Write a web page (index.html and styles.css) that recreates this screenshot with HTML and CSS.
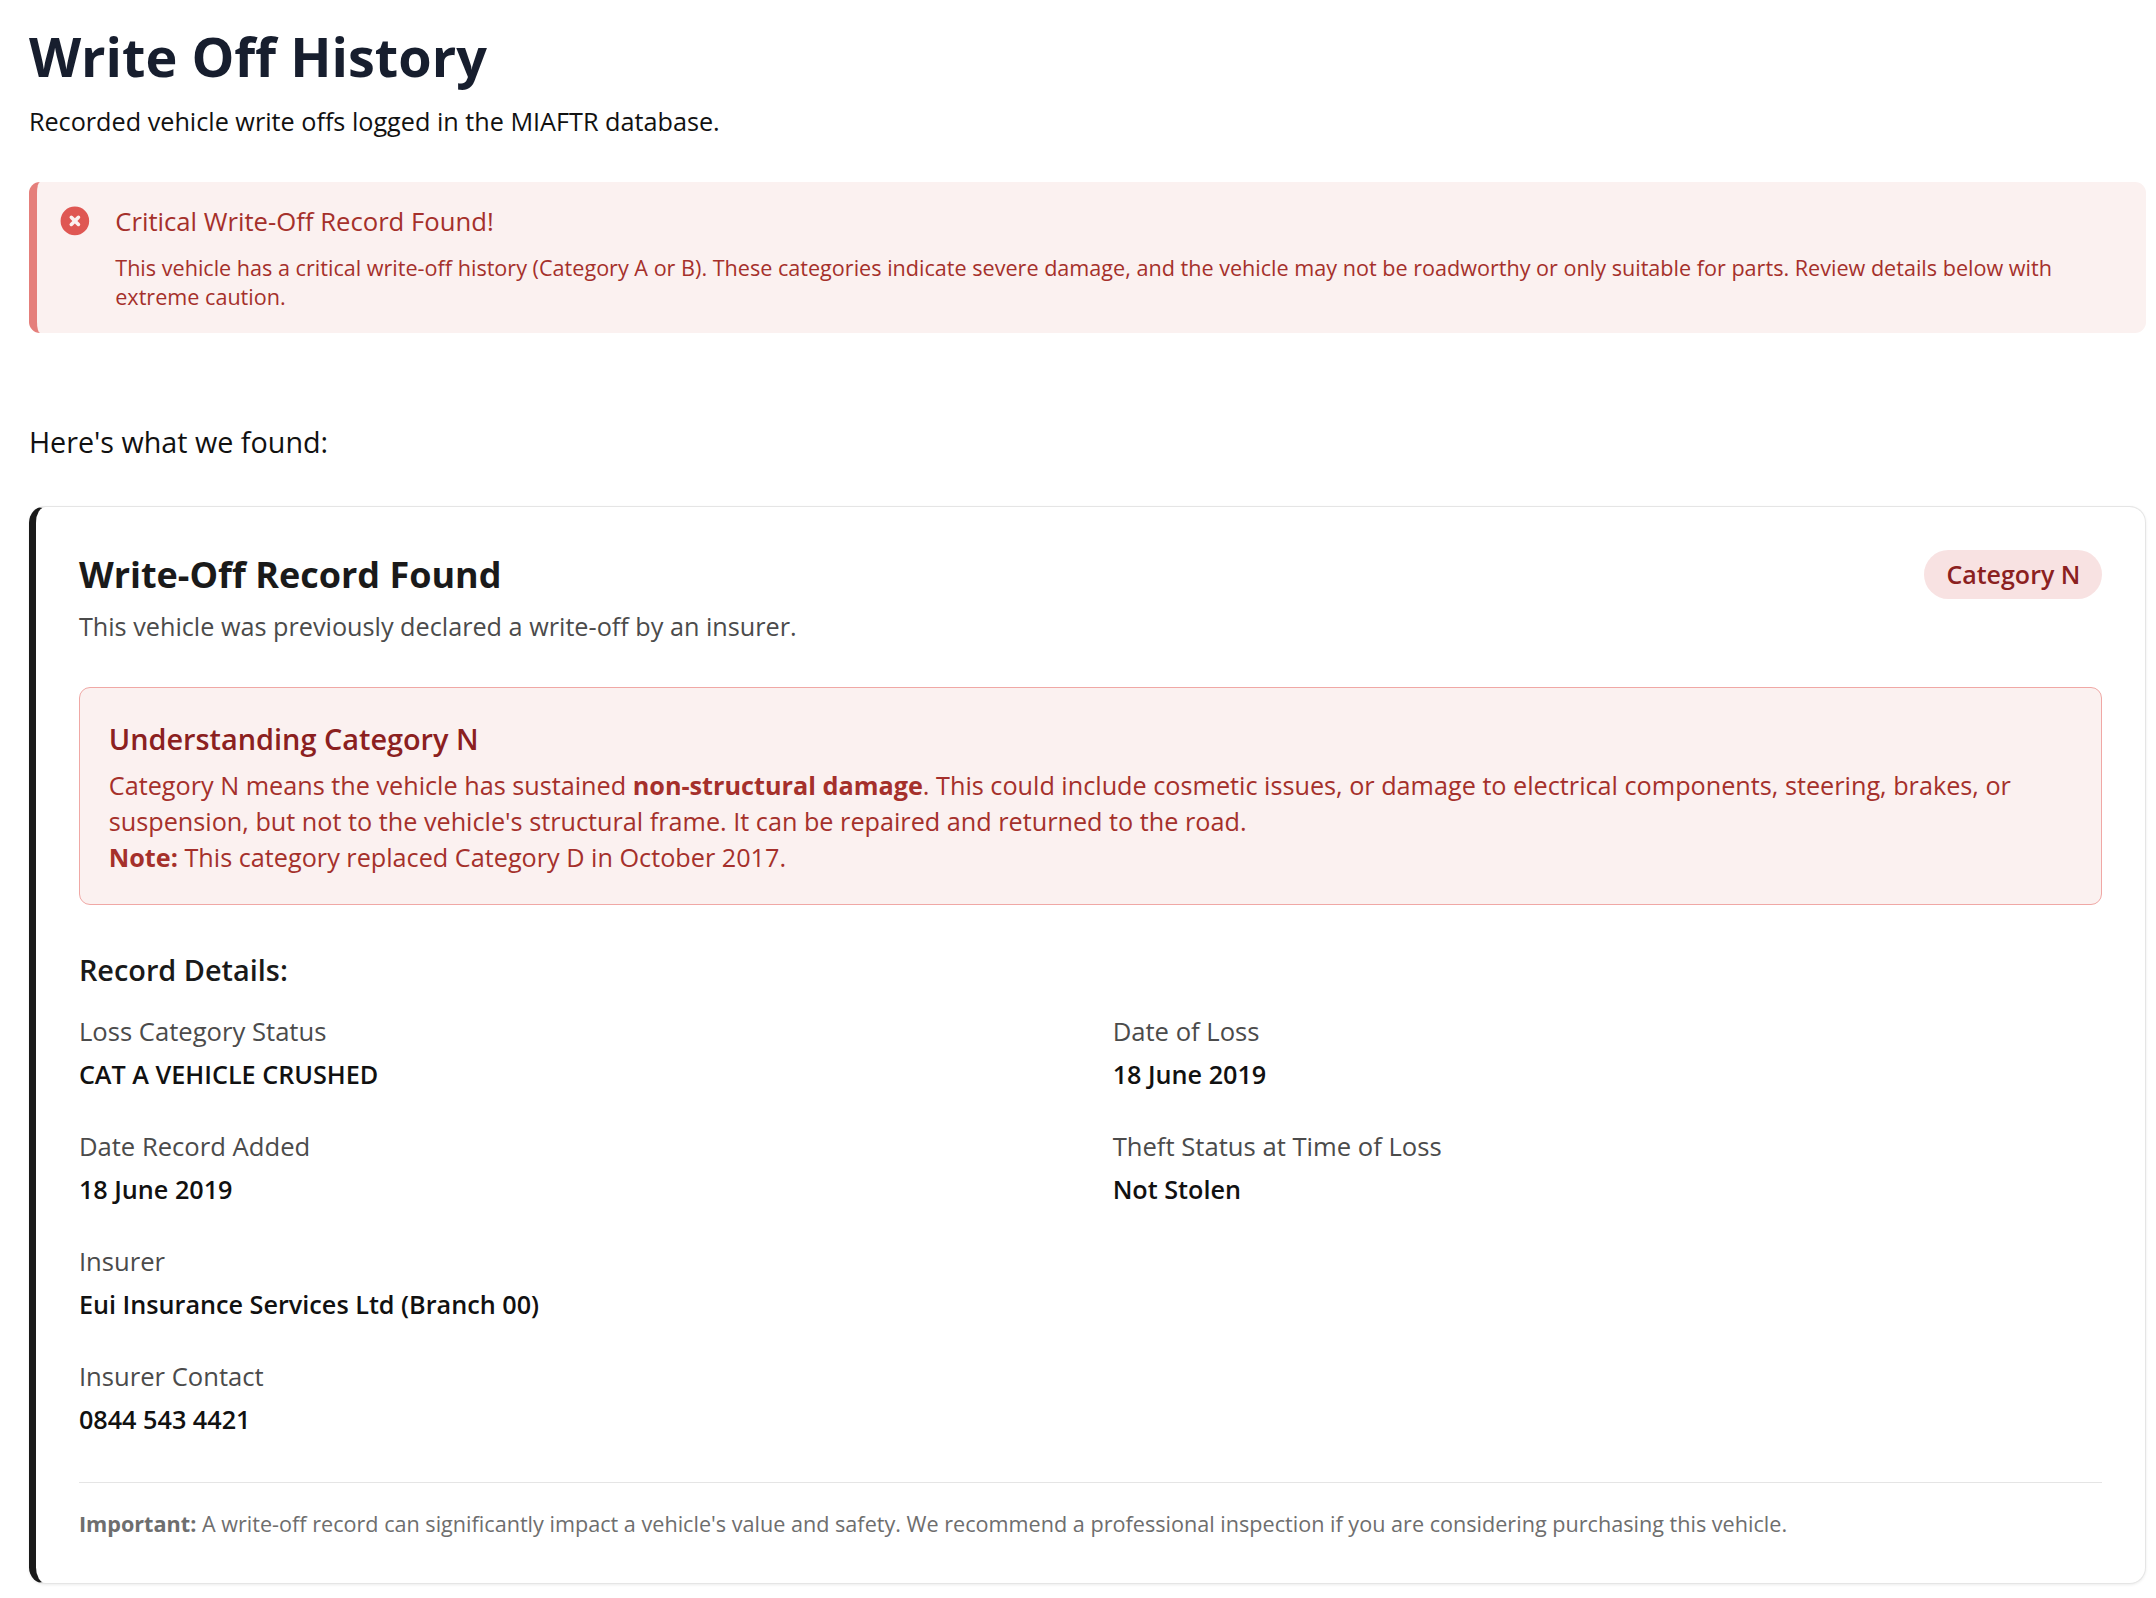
FILE: index.html
```html
<!DOCTYPE html>
<html lang="en">
<head>
<meta charset="utf-8">
<title>Write Off History</title>
<link rel="stylesheet" href="styles.css">
</head>
<body>
<main class="page">
  <header class="page-head">
    <h1 class="page-title">Write Off History</h1>
    <p class="page-sub">Recorded vehicle write offs logged in the MIAFTR database.</p>
  </header>

  <section class="alert">
    <svg class="alert-icon" viewBox="0 0 20 20" aria-hidden="true">
      <path fill-rule="evenodd" clip-rule="evenodd" d="M10 18a8 8 0 100-16 8 8 0 000 16zM8.707 7.293a1 1 0 00-1.414 1.414L8.586 10l-1.293 1.293a1 1 0 101.414 1.414L10 11.414l1.293 1.293a1 1 0 001.414-1.414L11.414 10l1.293-1.293a1 1 0 00-1.414-1.414L10 8.586 8.707 7.293z"/>
    </svg>
    <div class="alert-body">
      <h3 class="alert-title">Critical Write-Off Record Found!</h3>
      <p class="alert-text">This vehicle has a critical write-off history (Category A or B). These categories indicate severe damage, and the vehicle may not be roadworthy or only suitable for parts. Review details below with extreme caution.</p>
    </div>
  </section>

  <p class="found">Here's what we found:</p>

  <article class="card">
    <div class="card-head">
      <div>
        <h2 class="card-title">Write-Off Record Found</h2>
        <p class="card-sub">This vehicle was previously declared a write-off by an insurer.</p>
      </div>
      <span class="badge">Category N</span>
    </div>

    <div class="explain">
      <h4 class="explain-title">Understanding Category N</h4>
      <p class="explain-text">Category N means the vehicle has sustained <strong>non-structural damage</strong>. This could include cosmetic issues, or damage to electrical components, steering, brakes, or suspension, but not to the vehicle's structural frame. It can be repaired and returned to the road.<br><strong class="note">Note:</strong> This category replaced Category D in October 2017.</p>
    </div>

    <h3 class="details-title">Record Details:</h3>
    <dl class="details">
      <div class="field"><dt>Loss Category Status</dt><dd>CAT A VEHICLE CRUSHED</dd></div>
      <div class="field"><dt>Date of Loss</dt><dd>18 June 2019</dd></div>
      <div class="field"><dt>Date Record Added</dt><dd>18 June 2019</dd></div>
      <div class="field"><dt>Theft Status at Time of Loss</dt><dd>Not Stolen</dd></div>
      <div class="field wide"><dt>Insurer</dt><dd>Eui Insurance Services Ltd (Branch 00)</dd></div>
      <div class="field wide"><dt>Insurer Contact</dt><dd>0844 543 4421</dd></div>
    </dl>

    <p class="footnote"><strong>Important:</strong> A write-off record can significantly impact a vehicle's value and safety. We recommend a professional inspection if you are considering purchasing this vehicle.</p>
  </article>
</main>
</body>
</html>
```
FILE: styles.css
```css
* { box-sizing: border-box; }
html { font-size: 22px; }
body {
  margin: 0;
  background: #fff;
  font-family: "Open Sans", "Noto Sans", sans-serif;
  color: #111;
}
h1, h2, h3, h4, p, dl, dd { margin: 0; }

.page { padding: 1.47rem 0.4375rem 0.5rem 1.3125rem; }

.page-title {
  font-size: 2.4545rem;
  line-height: 2.25rem;
  font-weight: 700;
  color: #171e2e;
}
.page-sub {
  margin-top: 1.06rem;
  font-size: 1.146rem;
  line-height: 1.5rem;
  color: #111;
}

.alert {
  display: flex;
  margin-top: 1.985rem;
  padding: 1.03rem 1rem 0.985rem 0.9rem;
  background: #fbf1f0;
  border-left: 8px solid #e57f7b;
  border-radius: 0.5rem;
}
.alert-icon {
  flex: none;
  width: 1.625rem;
  height: 1.625rem;
  margin-top: -0.0625rem;
  fill: #df5753;
}
.alert-body { margin-left: 1.0375rem; }
.alert-title {
  font-size: 1.1675rem;
  line-height: 1.625rem;
  font-weight: 500;
  color: #a5302b;
}
.alert-text {
  margin-top: 0.625rem;
  font-size: 0.982rem;
  line-height: 1.3125rem;
  color: #a5302b;
}

.found {
  margin-top: 3.97rem;
  font-size: 1.306rem;
  line-height: 1.875rem;
  color: #111;
}

.card {
  margin-top: 2rem;
  padding: 1.9375rem 43px 2rem 43px;
  background: #fff;
  border: 1px solid #e5e5e5;
  border-left: 7px solid #1a1a1a;
  border-radius: 0.75rem;
  box-shadow: 0 1px 3px rgba(0, 0, 0, 0.08);
}
.card-head {
  display: flex;
  justify-content: space-between;
  align-items: flex-start;
}
.card-title {
  margin-top: 0.16rem;
  font-size: 1.6355rem;
  line-height: 2rem;
  font-weight: 700;
  color: #1a1a1a;
}
.card-sub {
  margin-top: 0.59rem;
  font-size: 1.147rem;
  line-height: 1.5rem;
  color: #4b4b4b;
}
.badge {
  padding: 0.375rem 1rem;
  font-size: 1.137rem;
  line-height: 1.5rem;
  font-weight: 600;
  color: #8b2020;
  background: #f8e2e2;
  border-radius: 999px;
}

.explain {
  margin-top: 2rem;
  padding: 1.46rem 1.3125rem 1.28rem;
  background: #fbf1f0;
  border: 1px solid #f0a8a5;
  border-radius: 0.5rem;
}
.explain-title {
  font-size: 1.3125rem;
  line-height: 1.75rem;
  font-weight: 600;
  color: #8b2020;
}
.explain-text {
  margin-top: 0.446rem;
  font-size: 1.147rem;
  line-height: 1.625rem;
  color: #a5302b;
}
.explain-text strong { font-weight: 700; color: #a5302b; }

.details-title {
  margin-top: 2.1rem;
  font-size: 1.3125rem;
  line-height: 1.75rem;
  font-weight: 600;
  color: #1a1a1a;
}
.details {
  display: grid;
  grid-template-columns: 1fr 1fr;
  column-gap: 2rem;
  row-gap: 1.76rem;
  margin-top: 1.156rem;
}
.wide { grid-column: 1 / -1; }
.field dt {
  font-size: 1.165rem;
  line-height: 1.5rem;
  color: #4b4b4b;
}
.field dd {
  margin-top: 0.47rem;
  font-size: 1.146rem;
  line-height: 1.5rem;
  font-weight: 600;
  color: #111;
}

.footnote {
  margin-top: 2.05rem;
  padding-top: 1.25rem;
  border-top: 1px solid #e5e5e5;
  font-size: 0.983rem;
  line-height: 1.3125rem;
  color: #6e6e6e;
}
.footnote strong { font-weight: 700; }
```
